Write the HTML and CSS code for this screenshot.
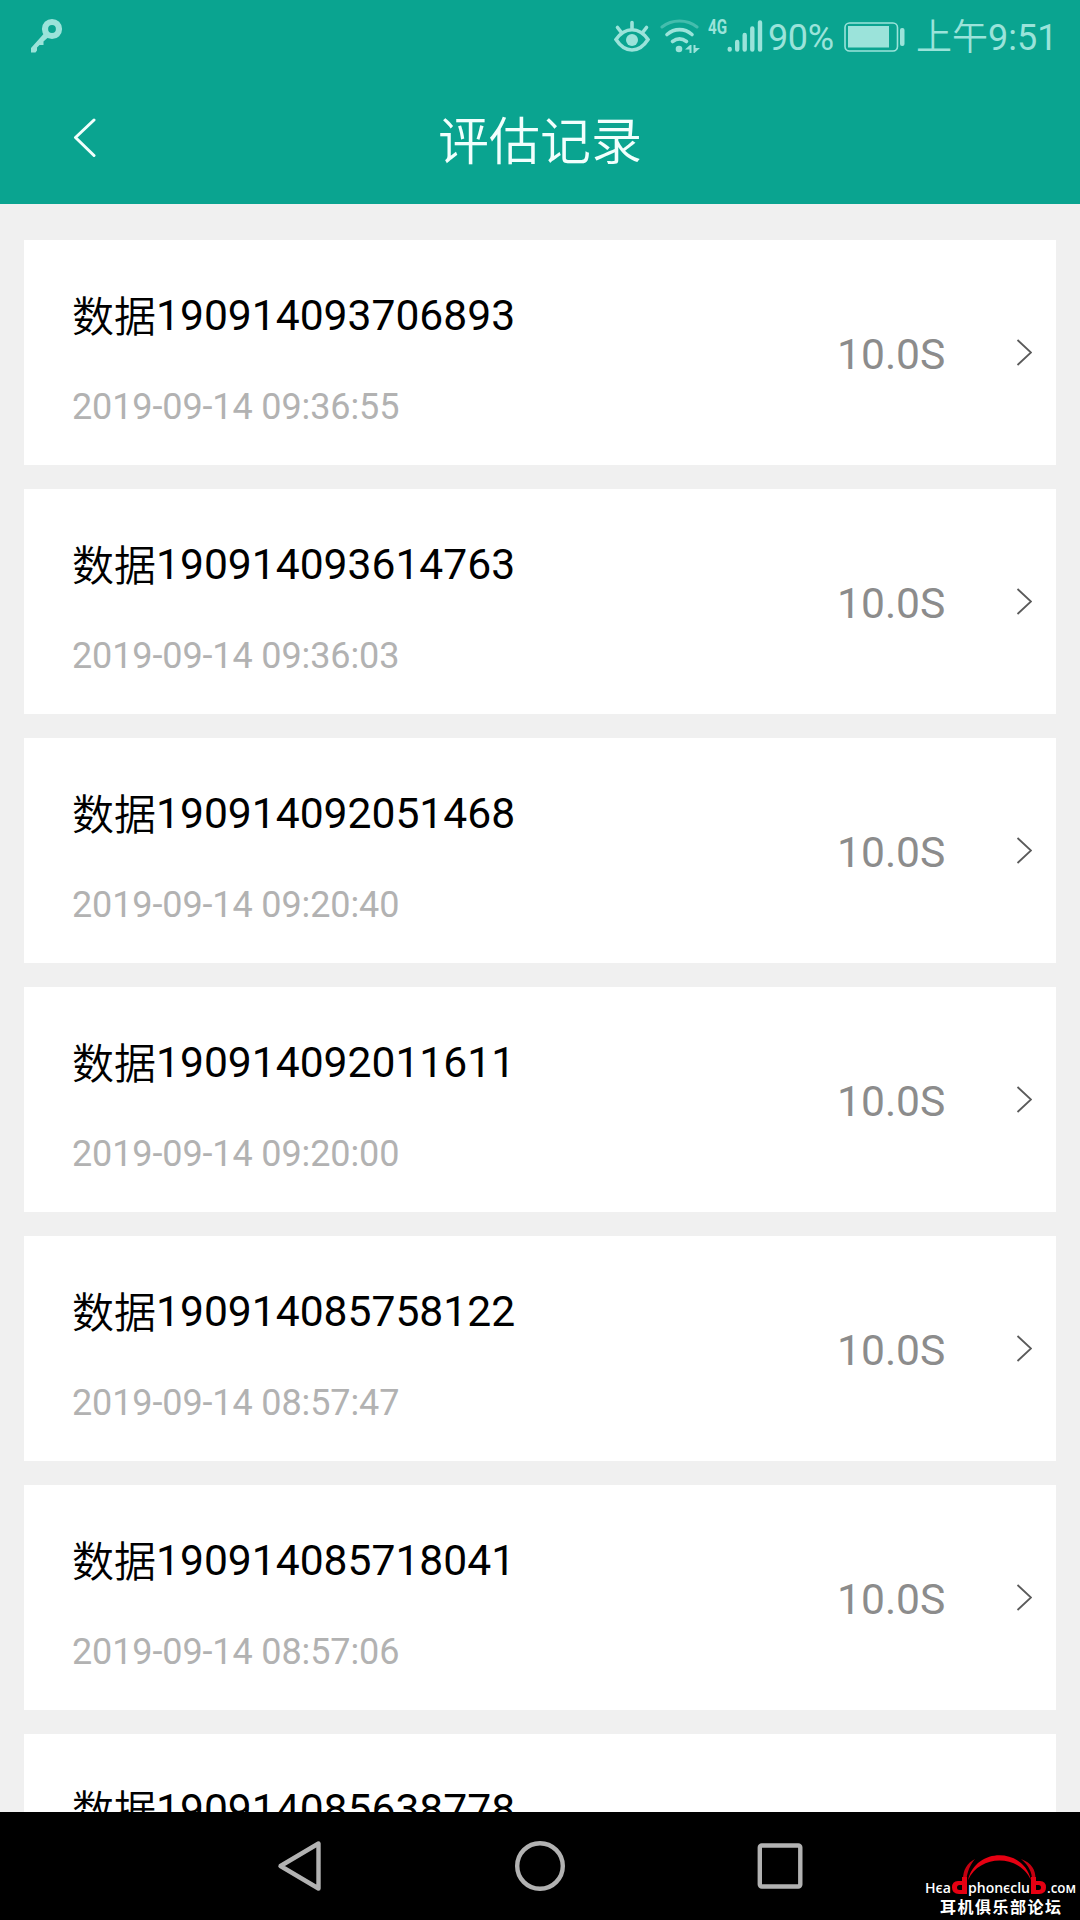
FILE: index.html
```html
<!DOCTYPE html>
<html lang="zh-CN">
<head>
<meta charset="utf-8">
<title>评估记录</title>
<link rel="stylesheet" href="styles.css">
</head>
<body>
<div class="screen">
  <header class="header">
    <div class="status">
      <svg class="key" width="34" height="38" viewBox="0 0 34 38">
        <circle cx="22" cy="12" r="7" fill="none" stroke="currentColor" stroke-width="6.2"/>
        <path d="M14 16.500 18 20.500 13.500 24.500V28H9.500L7 30.500V33.500L5.500 35.500H1V31z" fill="currentColor"/>
      </svg>
      <div class="status-right">
        <svg class="eye" width="36" height="34" viewBox="0 0 36 34" fill="none" stroke="currentColor" stroke-width="3.600" stroke-linecap="round">
          <path d="M2 20.500C11 7.500 25 7.500 34 20.500C25 34.500 11 34.500 2 20.500z"/>
          <path d="M18 9V3.500M7 13 3.500 8.500M29 13 32.500 8.500"/>
          <circle cx="18" cy="21" r="6" fill="currentColor" stroke="none"/>
        </svg>
        <svg class="wifi" width="40" height="34" viewBox="0 0 40 34" fill="none" stroke="currentColor" stroke-linecap="round">
          <path d="M2 8C12 0 27 0 37 8" stroke-width="3" opacity=".4"/>
          <path d="M7 15.500C14.500 9 24.500 9 32 15.500M12.500 22.500C17 19 22 19 26.500 22.500" stroke-width="3.600"/>
          <circle cx="19" cy="30" r="3.300" fill="currentColor" stroke="none"/>
          <path d="M29.500 26v8h2v-8zM30 26 25 30.500H31zM33.500 34V26H35.500V29H40L34.500 34z" fill="currentColor" stroke="none"/>
        </svg>
        <span class="net">4G</span>
        <svg class="bars" width="36" height="34" viewBox="0 0 36 34" stroke="currentColor" stroke-width="4.400" stroke-linecap="round">
          <path d="M2.700 30.500V30M10.200 30.500V23M17.700 30.500V16M25.300 30.500V9.500M33 30.500V3.500"/>
        </svg>
        <span class="percent">90%</span>
        <svg class="battery" width="62" height="30" viewBox="0 0 62 30">
          <rect x="1" y="1" width="52.500" height="28" rx="4.500" fill="none" stroke="currentColor" stroke-width="1.600"/>
          <rect x="4" y="4" width="41" height="21.500" fill="currentColor"/>
          <rect x="56" y="6" width="4.500" height="18" rx="2" fill="currentColor"/>
        </svg>
        <span class="clock"><span class="han">上午</span>9:51</span>
      </div>
    </div>
    <div class="titlebar">
      <svg class="back" width="24" height="40" viewBox="0 0 24 40">
        <path d="M21 2 2.500 19.500 21 37.500" fill="none" stroke="currentColor" stroke-width="3" stroke-linecap="round" stroke-linejoin="round"/>
      </svg>
      <h1 class="title">评估记录</h1>
    </div>
  </header>

  <main class="list">
    <article class="card"><div class="info"><h2 class="name"><span class="han">数据</span>190914093706893</h2><p class="date">2019-09-14 09:36:55</p></div><span class="duration">10.0S</span><svg class="go" width="16" height="28" viewBox="0 0 16 28"><path d="M1.500 1 15 13.500 1.500 26"/></svg></article>
    <article class="card"><div class="info"><h2 class="name"><span class="han">数据</span>190914093614763</h2><p class="date">2019-09-14 09:36:03</p></div><span class="duration">10.0S</span><svg class="go" width="16" height="28" viewBox="0 0 16 28"><path d="M1.500 1 15 13.500 1.500 26"/></svg></article>
    <article class="card"><div class="info"><h2 class="name"><span class="han">数据</span>190914092051468</h2><p class="date">2019-09-14 09:20:40</p></div><span class="duration">10.0S</span><svg class="go" width="16" height="28" viewBox="0 0 16 28"><path d="M1.500 1 15 13.500 1.500 26"/></svg></article>
    <article class="card"><div class="info"><h2 class="name"><span class="han">数据</span>190914092011611</h2><p class="date">2019-09-14 09:20:00</p></div><span class="duration">10.0S</span><svg class="go" width="16" height="28" viewBox="0 0 16 28"><path d="M1.500 1 15 13.500 1.500 26"/></svg></article>
    <article class="card"><div class="info"><h2 class="name"><span class="han">数据</span>190914085758122</h2><p class="date">2019-09-14 08:57:47</p></div><span class="duration">10.0S</span><svg class="go" width="16" height="28" viewBox="0 0 16 28"><path d="M1.500 1 15 13.500 1.500 26"/></svg></article>
    <article class="card"><div class="info"><h2 class="name"><span class="han">数据</span>190914085718041</h2><p class="date">2019-09-14 08:57:06</p></div><span class="duration">10.0S</span><svg class="go" width="16" height="28" viewBox="0 0 16 28"><path d="M1.500 1 15 13.500 1.500 26"/></svg></article>
    <article class="card"><div class="info"><h2 class="name"><span class="han">数据</span>190914085638778</h2></div></article>
  </main>

  <nav class="navbar">
    <svg width="50" height="54" viewBox="0 0 50 54"><path d="M43.500 4.500V49.500L5.500 27z"/></svg>
    <svg width="50" height="54" viewBox="0 0 50 54"><circle cx="25" cy="27" r="22.800"/></svg>
    <svg width="50" height="54" viewBox="0 0 50 54"><rect x="4.800" y="6.500" width="40.500" height="41" rx="2"/></svg>
    <svg class="watermark" width="160" height="68" viewBox="0 0 160 68">
      <path d="M43 28C51-5 98-5 106 28C94 2 55 2 43 28z" fill="#e60012"/>
      <path d="M38 27C38 18 42 11 50 7C45 13 42 20 41.500 28zM110.500 27C110.500 18 107 11 96 7C104 14 107 20 107 28z" fill="#c40010"/>
      <path fill="#e60012" fill-rule="evenodd" d="M37 25H42V42H34Q27 42 27 35.500Q27 29 33 29H37zM37 33H34.500Q32 33 32 35.500T34.500 38H37z"/>
      <path fill="#e60012" fill-rule="evenodd" d="M111 25H106V42H114Q121 42 121 35.500Q121 29 115 29H111zM111 33H113.500Q116 33 116 35.500T113.500 38H111z"/>
      <g fill="#fff" font-family="Open Sans, sans-serif" font-weight="600" font-size="14">
        <text x="0" y="41" textLength="26" lengthAdjust="spacingAndGlyphs">Hєa</text>
        <text x="43" y="41" textLength="62" lengthAdjust="spacingAndGlyphs">phonєclu</text>
        <text x="122" y="41" textLength="29" lengthAdjust="spacingAndGlyphs">.coм</text>
      </g>
      <text x="15" y="61" fill="#fff" font-family="Noto Sans CJK SC, sans-serif" font-weight="700" font-size="16" textLength="121">耳机俱乐部论坛</text>
    </svg>
  </nav>
</div>
</body>
</html>
```
FILE: styles.css
```css
* { box-sizing: border-box; margin: 0; padding: 0; }
body { font-family: Roboto, "Noto Sans CJK SC", sans-serif; }
svg { display: block; flex: none; }
.han { font-family: "Noto Sans CJK SC DemiLight", "Noto Sans CJK SC", sans-serif; font-weight: 350; line-height: 1; }

.screen {
  width: 1080px;
  height: 1920px;
  display: flex;
  flex-direction: column;
  overflow: hidden;
  background: #f0f0f0;
}

.header { height: 204px; flex: none; background: #0aa490; }
.status {
  height: 72px;
  padding: 0 26px 0 30px;
  display: flex;
  align-items: center;
  justify-content: space-between;
  color: #9be3da;
}
.status-right {
  width: 440px;
  height: 72px;
  display: flex;
  align-items: center;
  line-height: 42px;
  font-size: 36px;
  white-space: nowrap;
}
.eye { margin-right: 10px; }
.wifi { margin-right: 8px; }
.net {
  flex: none;
  width: 19px;
  margin-bottom: 18px;
  font: 700 20px/20px "Roboto", sans-serif;
  transform: scaleX(.76);
  transform-origin: left;
}
.bars { margin-right: 5px; }
.percent { flex: none; width: 76px; margin-top: 3px; letter-spacing: -.4px; }
.battery { margin: 1px 10px 0 0; }
.clock { margin-top: 3px; }

.titlebar {
  height: 132px;
  padding: 0 73px;
  display: grid;
  grid-template-columns: 24px 1fr 24px;
  align-items: center;
  color: #f2fffd;
}
.title { padding-top: 10px; font-size: 51px; font-weight: 350; line-height: 72px; text-align: center; }

.list {
  flex: 1;
  min-height: 0;
  overflow: hidden;
  padding: 36px 24px 0;
  display: flex;
  flex-direction: column;
  gap: 24px;
}
.card {
  height: 225px;
  flex: none;
  padding: 0 23px 0 48px;
  display: flex;
  align-items: center;
  background: #fff;
}
.info { flex: 1; align-self: flex-start; padding-top: 44px; }
.name { display: flex; align-items: center; height: 62px; font-size: 42.6px; font-weight: 400; line-height: 62px; color: #000; }
.name .han { padding-bottom: 2px; font-size: 42px; line-height: 62px; }
.date { margin-top: 40px; font-size: 36px; line-height: 42px; letter-spacing: -.12px; color: #b2b2b2; }
.duration { width: 179px; padding-top: 2px; font-size: 42.6px; line-height: 50px; color: #8c8c8c; }
.go { margin-right: 1px; fill: none; stroke: #5a5a5a; stroke-width: 1.8; }

.navbar {
  position: relative;
  height: 108px;
  flex: none;
  padding: 0 275px;
  display: flex;
  align-items: center;
  justify-content: space-between;
  background: #000;
  fill: none;
  stroke: #b2b2b2;
  stroke-width: 4.4;
  stroke-linejoin: round;
}
.watermark { position: absolute; left: 925px; top: 40px; stroke: none; }
```
